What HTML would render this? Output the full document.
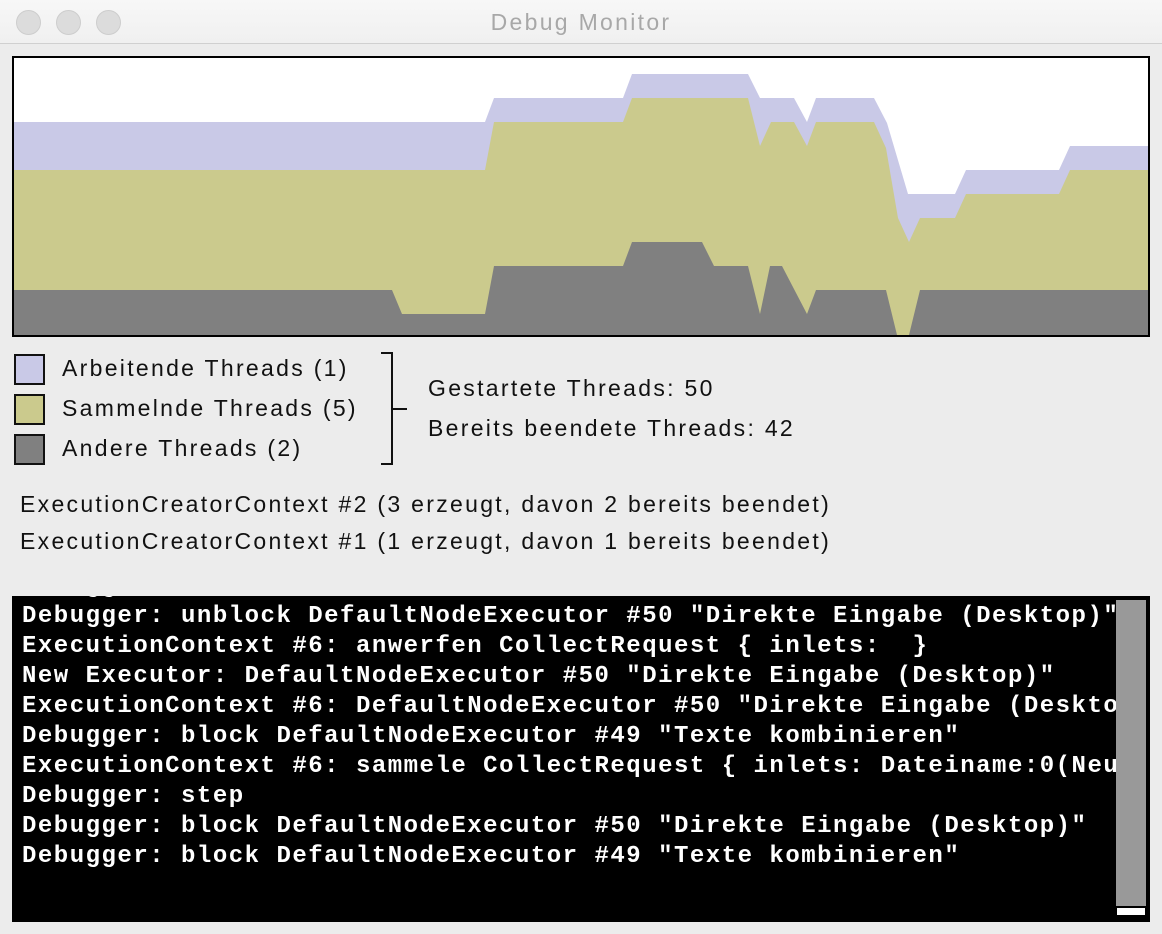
<!DOCTYPE html>
<html><head><meta charset="utf-8"><style>
body{margin:0;width:1162px;height:934px;background:#ececec;position:relative;overflow:hidden;font-family:"Liberation Sans",sans-serif}
.tb{position:absolute;left:0;top:0;width:1162px;height:43px;background:linear-gradient(#f7f7f7,#f0f0f0);border-bottom:1px solid #d0d0d0}
.c{position:absolute;top:10px;width:23px;height:23px;border-radius:50%;background:#dcdcdc;border:1px solid #cdcdcd}
.title{position:absolute;top:9px;left:0;width:1162px;text-align:center;font-size:23px;color:#a8a8a8;letter-spacing:2.3px}
.t{position:absolute;font-size:23px;color:#111;white-space:nowrap;letter-spacing:2.3px}
.sq{position:absolute;left:14px;width:27px;height:27px;border:2px solid #111}
.con{position:absolute;left:12px;top:596px;width:1138px;height:326px;background:#000;overflow:hidden}
.con pre{margin:0;position:absolute;left:10px;top:-24px;font-family:"Liberation Mono",monospace;font-weight:bold;font-size:24px;letter-spacing:1.5px;line-height:30px;color:#fff}
</style></head><body>
<div class="tb"><div class="c" style="left:16px"></div><div class="c" style="left:56px"></div><div class="c" style="left:96px"></div><div class="title">Debug Monitor</div></div>
<svg style="position:absolute;left:0;top:0" width="1162" height="340">
<rect x="13" y="57" width="1136" height="279" fill="#fff"/>
<polygon fill="#c9c9e7" points="14,335 14,122 485,122 494,98 623,98 632,74 748,74 760,98 794,98 807,122 816,98 874,98 887,123 908,194 955,194 966,170 1059,170 1070,146 1148,146 1148,335"/>
<polygon fill="#cbca8d" points="14,335 14,170 485,170 494,122 623,122 632,98 748,98 760,146 771,122 794,122 807,146 816,122 874,122 886,148 898,218 909,242 920,218 955,218 966,194 1059,194 1070,170 1148,170 1148,335"/>
<polygon fill="#808080" points="14,335 14,290 392,290 402,314 485,314 494,266 623,266 632,242 702,242 714,266 748,266 760,314 770,266 782,266 807,314 816,290 886,290 897,335 909,335 920,290 1148,290 1148,335"/>
<rect x="13" y="57" width="1136" height="279" fill="none" stroke="#000" stroke-width="2"/>
</svg>
<div class="sq" style="top:354px;background:#c9c9e7"></div>
<div class="sq" style="top:394px;background:#cbca8d"></div>
<div class="sq" style="top:434px;background:#808080"></div>
<div class="t" style="left:62px;top:355px">Arbeitende Threads (1)</div>
<div class="t" style="left:62px;top:395px">Sammelnde Threads (5)</div>
<div class="t" style="left:62px;top:435px">Andere Threads (2)</div>
<svg style="position:absolute;left:376px;top:350px" width="40" height="120"><path d="M5 3H16V114H5M16 59H31" fill="none" stroke="#111" stroke-width="2"/></svg>
<div class="t" style="left:428px;top:375px">Gestartete Threads: 50</div>
<div class="t" style="left:428px;top:415px">Bereits beendete Threads: 42</div>
<div class="t" style="left:20px;top:491px">ExecutionCreatorContext #2 (3 erzeugt, davon 2 bereits beendet)</div>
<div class="t" style="left:20px;top:528px">ExecutionCreatorContext #1 (1 erzeugt, davon 1 bereits beendet)</div>
<div class="con"><pre>Debugger: block DefaultNodeExecutor #50 "
Debugger: unblock DefaultNodeExecutor #50 "Direkte Eingabe (Desktop)"
ExecutionContext #6: anwerfen CollectRequest { inlets:  }
New Executor: DefaultNodeExecutor #50 "Direkte Eingabe (Desktop)"
ExecutionContext #6: DefaultNodeExecutor #50 "Direkte Eingabe (Desktop)"
Debugger: block DefaultNodeExecutor #49 "Texte kombinieren"
ExecutionContext #6: sammele CollectRequest { inlets: Dateiname:0(Neue
Debugger: step
Debugger: block DefaultNodeExecutor #50 "Direkte Eingabe (Desktop)"
Debugger: block DefaultNodeExecutor #49 "Texte kombinieren"</pre>
<div style="position:absolute;left:1104px;top:4px;width:30px;height:306px;background:#999"></div>
<div style="position:absolute;left:1105px;top:312px;width:28px;height:7px;background:#fff"></div>
</div>
</body></html>
